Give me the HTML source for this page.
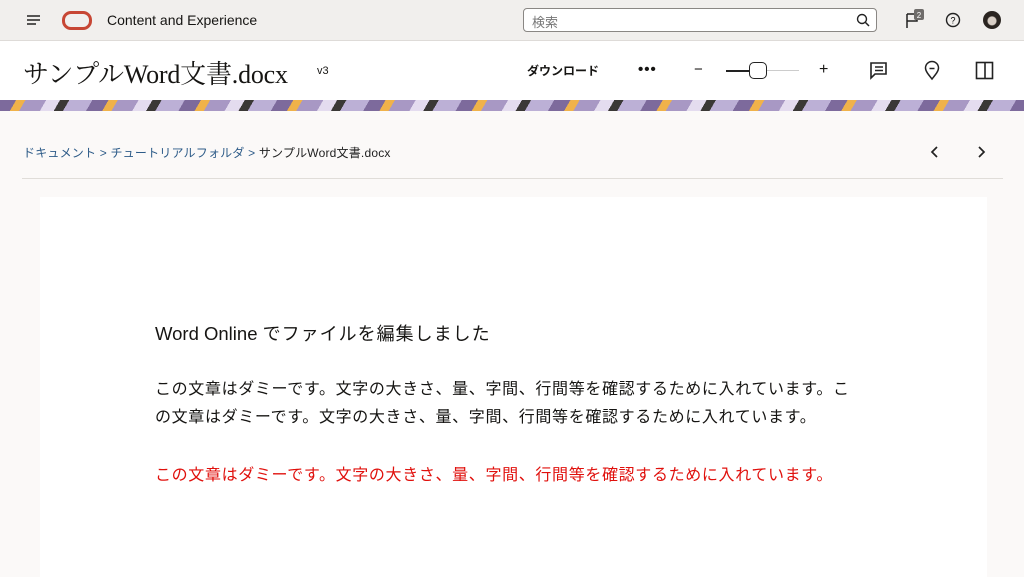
<!DOCTYPE html>
<html><head><meta charset="utf-8"><style>
*{margin:0;padding:0;box-sizing:border-box}
body{width:1024px;height:570px;overflow:hidden;background:#fbf9f8;font-family:"Liberation Sans","Noto Sans CJK JP",sans-serif;position:relative;color:#161513}
.top{position:absolute;left:0;top:0;width:1024px;height:41px;background:#f1efed;border-bottom:1px solid #dedbd8}
.hdr{position:absolute;left:0;top:41px;width:1024px;height:59px;background:#fff}
.banner{position:absolute;left:0;top:100px;width:1024px;height:11px;background:repeating-linear-gradient(120deg,#7d6a9c 0 14px,#f0b24a 14px 22px,#a898c4 22px 40px,#e4dcef 40px 52px,#3a3836 52px 60px,#bcb0d6 60px 80px)}
.abs{position:absolute}
.doc{position:absolute;left:40px;top:197px;width:947px;height:380px;background:#fff}
</style></head><body>
<div class="top"></div>
<svg class="abs" style="left:26px;top:14px" width="16" height="12"><path d="M1 2h13M1 6h13M1 10h9" stroke="#222" stroke-width="1.5"/></svg>
<div class="abs" style="left:62px;top:11px;width:30px;height:19px;border:3px solid #c74634;border-radius:9px"></div>
<div class="abs" style="left:107px;top:12px;font-size:14px">Content and Experience</div>
<div class="abs" style="left:523px;top:8px;width:354px;height:24px;border:1px solid #8a8784;border-radius:4px;background:#fff;font-size:13px;color:#777;padding:3px 8px">検索</div>
<svg class="abs" style="left:856px;top:13px" width="14" height="14"><circle cx="6" cy="6" r="4.5" fill="none" stroke="#222" stroke-width="1.4"/><path d="M9.5 9.5l3.5 3.5" stroke="#222" stroke-width="1.5"/></svg>
<svg class="abs" style="left:905px;top:8px" width="22" height="22"><path d="M2 20V6M2 6h10v7H2" fill="none" stroke="#222" stroke-width="1.5"/><rect x="9" y="1" width="10" height="11" rx="2" fill="#6f6c6a"/><text x="14" y="10" font-size="8" fill="#fff" text-anchor="middle" font-family="Liberation Sans">2</text></svg>
<svg class="abs" style="left:945px;top:12px" width="16" height="16"><circle cx="8" cy="8" r="6.5" fill="none" stroke="#222" stroke-width="1.4"/><text x="8" y="11.5" font-size="9" text-anchor="middle" font-family="Liberation Sans">?</text></svg>
<div class="abs" style="left:983px;top:11px;width:18px;height:18px;border-radius:50%;background:radial-gradient(circle at 50% 55%,#d9cfc6 0 4px,#2a2420 5px)"></div>
<div class="hdr"></div>
<div class="abs" style="left:23px;top:54px;font-size:26px;font-family:'Liberation Serif','Noto Serif CJK JP',serif;letter-spacing:-0.2px">サンプルWord文書.docx</div>
<div class="abs" style="left:317px;top:65px;font-size:11px">v3</div>
<div class="abs" style="left:527px;top:62px;font-size:12px;font-weight:bold">ダウンロード</div>
<div class="abs" style="left:638px;top:61px;font-size:15px;font-weight:bold;letter-spacing:1px">•••</div>
<div class="abs" style="left:694px;top:61px;font-size:15px">−</div>
<div class="abs" style="left:726px;top:70px;width:28px;height:2px;background:#222"></div>
<div class="abs" style="left:754px;top:70px;width:45px;height:1px;background:#ccc"></div>
<div class="abs" style="left:749px;top:62px;width:18px;height:17px;border:1.5px solid #222;border-radius:5px;background:#fff"></div>
<div class="abs" style="left:819px;top:61px;font-size:16px">+</div>
<svg class="abs" style="left:869px;top:61px" width="20" height="20"><path d="M2 2h15v11H6l-4 4z" fill="none" stroke="#222" stroke-width="1.6"/><path d="M6 6h8M6 9.5h8" stroke="#222" stroke-width="1.5"/></svg>
<svg class="abs" style="left:923px;top:60px" width="18" height="22"><path d="M9 19C5 14 2.5 11 2.5 8a6.5 6.5 0 0 1 13 0c0 3-2.5 6-6.5 11z" fill="none" stroke="#222" stroke-width="1.5"/><path d="M6.5 8.5h5" stroke="#222" stroke-width="1.5"/></svg>
<svg class="abs" style="left:975px;top:61px" width="20" height="20"><rect x="1.5" y="1.5" width="16" height="16" fill="none" stroke="#222" stroke-width="1.6"/><path d="M10 1.5v16" stroke="#222" stroke-width="1.6"/></svg>
<div class="banner"></div>
<div class="abs" style="left:23px;top:144px;font-size:12px;color:#2d5b88;letter-spacing:0.2px">ドキュメント &gt; チュートリアルフォルダ &gt; <span style="color:#222">サンプルWord文書.docx</span></div>
<svg class="abs" style="left:929px;top:145px" width="12" height="14"><path d="M8 2L3 7l5 5" fill="none" stroke="#222" stroke-width="1.7"/></svg>
<svg class="abs" style="left:975px;top:145px" width="12" height="14"><path d="M4 2l5 5-5 5" fill="none" stroke="#222" stroke-width="1.7"/></svg>
<div class="abs" style="left:22px;top:178px;width:981px;height:1px;background:#e0ddd9"></div>
<div class="doc"></div>
<div class="abs" style="left:155px;top:320px;font-size:18.5px">Word Online <span style="font-size:18px;letter-spacing:1px">でファイルを編集しました</span></div>
<div class="abs" style="left:155px;top:376px;width:705px;font-size:16px;line-height:28px;letter-spacing:0.65px">この文章はダミーです。文字の大きさ、量、字間、行間等を確認するために入れています。この文章はダミーです。文字の大きさ、量、字間、行間等を確認するために入れています。</div>
<div class="abs" style="left:155px;top:461px;font-size:16px;color:#e0100c;letter-spacing:0.65px">この文章はダミーです。文字の大きさ、量、字間、行間等を確認するために入れています。</div>
</body></html>
